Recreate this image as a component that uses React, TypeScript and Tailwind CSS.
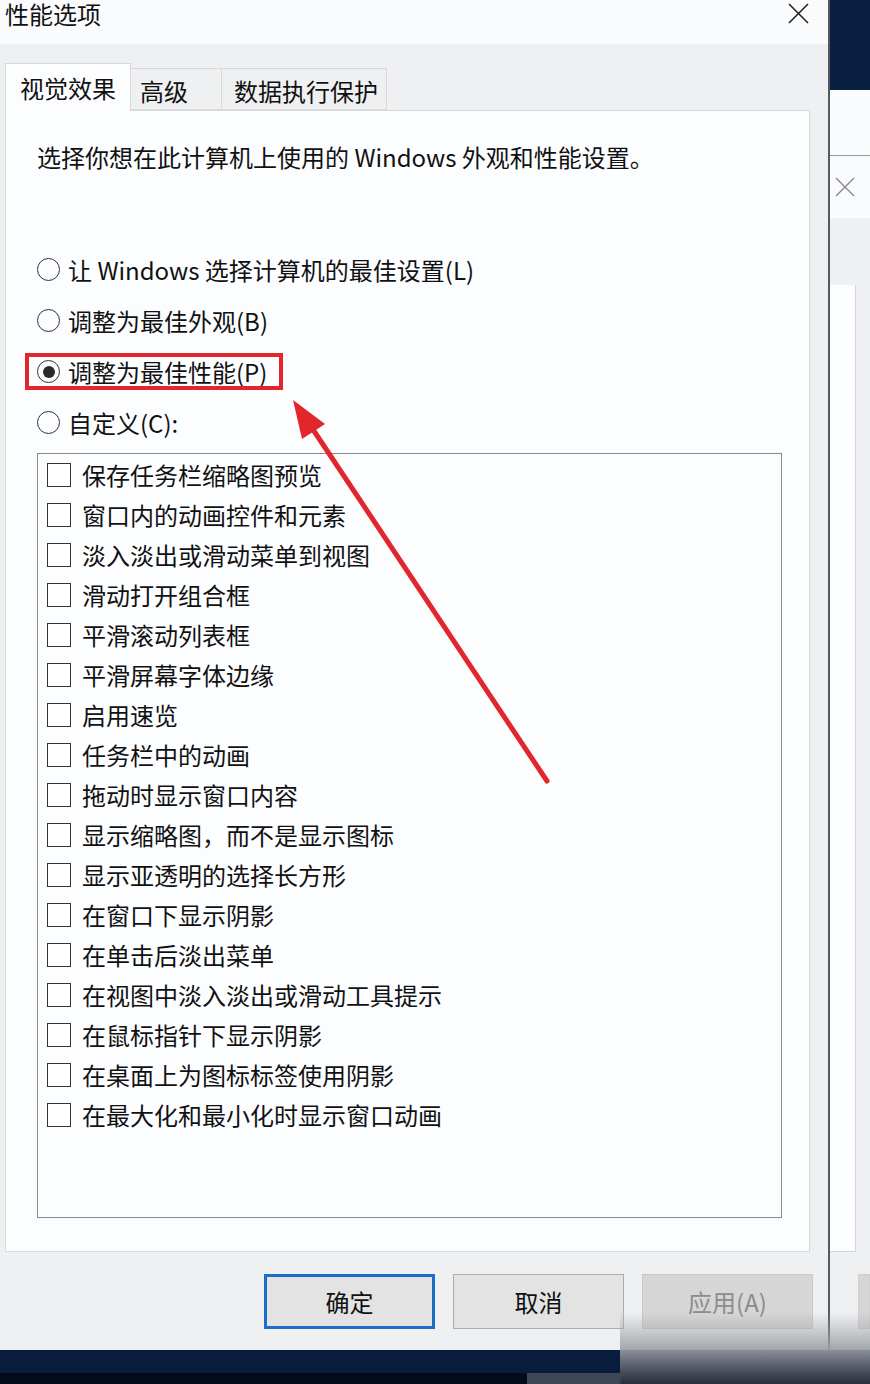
import { useState } from 'react'

const effects = [
  '保存任务栏缩略图预览',
  '窗口内的动画控件和元素',
  '淡入淡出或滑动菜单到视图',
  '滑动打开组合框',
  '平滑滚动列表框',
  '平滑屏幕字体边缘',
  '启用速览',
  '任务栏中的动画',
  '拖动时显示窗口内容',
  '显示缩略图，而不是显示图标',
  '显示亚透明的选择长方形',
  '在窗口下显示阴影',
  '在单击后淡出菜单',
  '在视图中淡入淡出或滑动工具提示',
  '在鼠标指针下显示阴影',
  '在桌面上为图标标签使用阴影',
  '在最大化和最小化时显示窗口动画',
]

const options = [
  { id: 'auto', label: '让 Windows 选择计算机的最佳设置(L)' },
  { id: 'look', label: '调整为最佳外观(B)' },
  { id: 'perf', label: '调整为最佳性能(P)' },
  { id: 'custom', label: '自定义(C):' },
]

function Radio({ checked }: { checked: boolean }) {
  return (
    <span className="flex h-[23px] w-[23px] shrink-0 items-center justify-center rounded-full border-[1.5px] border-[#333] bg-[#fcfdff]">
      {checked && <span className="h-[12px] w-[12px] rounded-full bg-[#2a2a2a]" />}
    </span>
  )
}

export default function App() {
  const [choice, setChoice] = useState('perf')

  return (
    <div className="relative flex h-[1384px] w-[870px] flex-col overflow-hidden bg-[#eff0f2] font-[family-name:Noto_Sans_CJK_SC,sans-serif] text-[#111]">
      <div className="flex h-[1350px]">
        {/* 主对话框 */}
        <div className="flex w-[828px] flex-col">
          <div className="flex h-[44px] items-start justify-between bg-[#fafbfd] pl-[5px] pr-[19px]">
            <span className="mt-[1px] text-[24px] leading-[26px]">性能选项</span>
            <svg width="21" height="21" viewBox="0 0 21 21" className="mt-[3px]">
              <path d="M1 1 L20 20 M20 1 L1 20" stroke="#222" strokeWidth="1.6" />
            </svg>
          </div>

          <div className="flex flex-1 flex-col px-[5px] pt-[19px]">
            {/* 标签页 */}
            <div className="flex h-[47px] items-end">
              <div className="relative z-10 -mb-px flex h-[48px] w-[126px] items-center border border-b-0 border-[#d9d9d9] bg-[#fcfdff] pl-[14px] text-[24px]">
                视觉效果
              </div>
              <div className="flex h-[42px] w-[91px] items-center border border-l-0 border-[#d9d9d9] pl-[9px] pt-[3px] text-[24px]">
                高级
              </div>
              <div className="flex h-[42px] w-[165px] items-center border border-l-0 border-[#d9d9d9] pl-[12px] pt-[3px] text-[24px]">
                数据执行保护
              </div>
            </div>

            <div className="flex h-[1142px] w-[805px] flex-col border border-[#d9d9d9] bg-[#fcfdff] pl-[31px] pt-[29px]">
              <p className="text-[24px] leading-[34px]">选择你想在此计算机上使用的 Windows 外观和性能设置。</p>

              <div className="mt-[70px] flex flex-col">
                {options.map((o) => (
                  <label
                    key={o.id}
                    onClick={() => setChoice(o.id)}
                    className="relative flex h-[51px] cursor-default items-center gap-[8px] text-[24px]"
                  >
                    <Radio checked={choice === o.id} />
                    <span>{o.label}</span>
                    {o.id === 'perf' && (
                      <span className="pointer-events-none absolute left-[-12px] top-[7px] h-[37px] w-[258px] border-[4px] border-[#e3262b]" />
                    )}
                  </label>
                ))}
              </div>

              <div className="mt-[5px] flex h-[765px] w-[745px] flex-col border border-[#8a8a8a] bg-[#fcfdff] pl-[9px] pt-[1px]">
                {effects.map((e) => (
                  <div key={e} className="flex h-[40px] items-center gap-[11px] text-[24px]">
                    <span className="h-[24px] w-[24px] shrink-0 border-[1.5px] border-[#333] bg-white" />
                    <span>{e}</span>
                  </div>
                ))}
              </div>
            </div>

            {/* 按钮 */}
            <div className="flex justify-end gap-[18px] pr-[10px] pt-[22px]">
              <button className="h-[55px] w-[171px] border-[3px] border-[#1a6fc4] bg-[#e3e3e3] text-[24px] text-[#111]">确定</button>
              <button className="h-[55px] w-[171px] border border-[#adadad] bg-[#e3e3e3] text-[24px] text-[#111]">取消</button>
              <button className="h-[55px] w-[171px] border border-[#c9c9c9] bg-[#d6d6d6] text-[24px] text-[#8c8c8c]">应用(A)</button>
            </div>
          </div>
        </div>

        {/* 右侧后方窗口 */}
        <div className="flex flex-1 flex-col border-l-2 border-[#555a62]">
          <div className="h-[90px] bg-[#0b1f40]" />
          <div className="h-[66px] border-b border-[#9a9a9a] bg-[#fafbfd]" />
          <div className="flex h-[62px] items-center bg-[#fafbfd] pl-[5px]">
            <svg width="20" height="20" viewBox="0 0 20 20">
              <path d="M1 1 L19 19 M19 1 L1 19" stroke="#888" strokeWidth="1.4" />
            </svg>
          </div>
          <div className="flex flex-1 flex-col bg-[#eff0f2]">
            <div className="mt-[67px] h-[967px] w-[26px] border-b border-r border-[#d4d4d4] bg-[#fcfdff]" />
            <div className="ml-[28px] mt-[22px] h-[55px] flex-1 border border-[#cfcfcf] bg-[#d6d6d6]" />
            <div className="h-[21px]" />
          </div>
        </div>
      </div>

      {/* 任务栏 */}
      <div className="flex flex-1 flex-col">
        <div className="h-[23px] bg-[#0a1c3b]" />
        <div className="flex flex-1 bg-[#040c1b]">
          <div className="w-[527px]" />
          <div className="w-[95px] bg-[#3f4655]" />
        </div>
      </div>

      {/* 模糊水印 */}
      <div className="pointer-events-none absolute left-[620px] top-[1312px] h-[72px] w-[250px] bg-gradient-to-b from-[#eff0f2]/0 via-[#9fa2a8]/90 to-[#2b313d]/90" />

      {/* 红色箭头 */}
      <svg className="pointer-events-none absolute left-0 top-0" width="870" height="1384">
        <line x1="547" y1="781" x2="312" y2="428" stroke="#e3262b" strokeWidth="5" strokeLinecap="round" />
        <polygon points="293,400 302,439 325,424" fill="#e3262b" />
      </svg>
    </div>
  )
}
